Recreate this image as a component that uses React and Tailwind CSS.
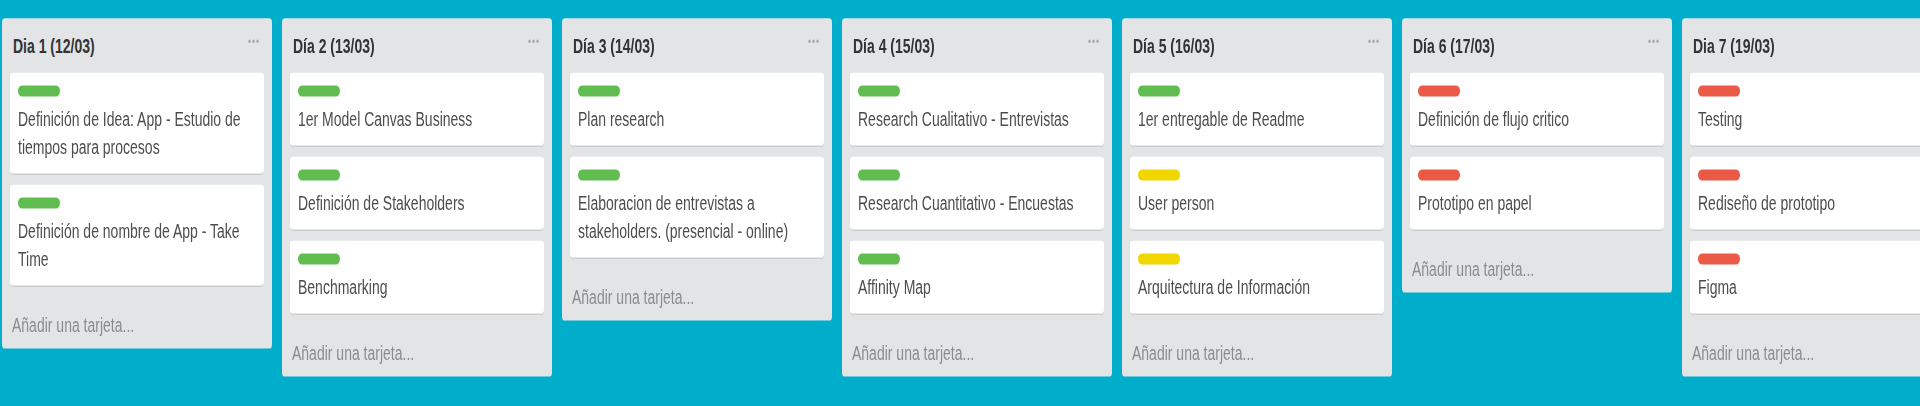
import React from "react";

const GREEN = "bg-[#61bd4f]";
const YELLOW = "bg-[#f2d600]";
const RED = "bg-[#eb5a46]";

const lists = [
  {
    title: "Dia 1 (12/03)",
    cards: [
      { label: GREEN, text: "Definición de Idea: App - Estudio de tiempos para procesos" },
      { label: GREEN, text: "Definición de nombre de App - Take Time" },
    ],
  },
  {
    title: "Día 2 (13/03)",
    cards: [
      { label: GREEN, text: "1er Model Canvas Business" },
      { label: GREEN, text: "Definición de Stakeholders" },
      { label: GREEN, text: "Benchmarking" },
    ],
  },
  {
    title: "Día 3 (14/03)",
    cards: [
      { label: GREEN, text: "Plan research" },
      { label: GREEN, text: "Elaboracion de entrevistas a stakeholders. (presencial - online)" },
    ],
  },
  {
    title: "Día 4 (15/03)",
    cards: [
      { label: GREEN, text: "Research Cualitativo - Entrevistas" },
      { label: GREEN, text: "Research Cuantitativo - Encuestas" },
      { label: GREEN, text: "Affinity Map" },
    ],
  },
  {
    title: "Día 5 (16/03)",
    cards: [
      { label: GREEN, text: "1er entregable de Readme" },
      { label: YELLOW, text: "User person" },
      { label: YELLOW, text: "Arquitectura de Información" },
    ],
  },
  {
    title: "Día 6 (17/03)",
    cards: [
      { label: RED, text: "Definición de flujo critico" },
      { label: RED, text: "Prototipo en papel" },
    ],
  },
  {
    title: "Dia 7 (19/03)",
    cards: [
      { label: RED, text: "Testing" },
      { label: RED, text: "Rediseño de prototipo" },
      { label: RED, text: "Figma" },
    ],
  },
];

function Dots() {
  return (
    <svg width="11" height="3" viewBox="0 0 11 3" className="mt-[4px]">
      <circle cx="1.5" cy="1.5" r="1.2" fill="#a5a5a5" />
      <circle cx="5.5" cy="1.5" r="1.2" fill="#a5a5a5" />
      <circle cx="9.5" cy="1.5" r="1.2" fill="#a5a5a5" />
    </svg>
  );
}

function Card({ label, text }) {
  return (
    <div className="bg-white rounded-[3px] shadow-[0_1px_0_#cccccc] px-[8px] pt-[9px] pb-[9px]">
      <div className={`w-[42px] h-[8px] rounded-[4px] ${label}`} />
      <div className="mt-[6px] text-[14px] leading-[20px] text-[#4d4d4d]">{text}</div>
    </div>
  );
}

function List({ title, cards }) {
  return (
    <div className="w-[270px] shrink-0 bg-[#e2e4e6] rounded-[3px]">
      <div className="flex items-start justify-between pl-[11px] pr-[13px] pt-[11px] pb-[10px]">
        <h2 className="text-[14px] leading-[18px] font-bold text-[#333333]">{title}</h2>
        <Dots />
      </div>
      <div className="flex flex-col gap-[8px] px-[8px]">
        {cards.map((c, i) => (
          <Card key={i} {...c} />
        ))}
      </div>
      <div className="mt-[8px] px-[10px] pt-[10px] pb-[7px] text-[14px] leading-[20px] text-[#8c8c8c]">
        Añadir una tarjeta...
      </div>
    </div>
  );
}

export default function App() {
  return (
    <div className="w-full h-[406px] bg-[#00aecc] overflow-hidden font-['Liberation_Sans',Arial,sans-serif]">
      {/* the screenshot is stretched vertically, so the board is too */}
      <div className="origin-top scale-y-[1.4] h-[290px] flex items-start gap-[10px] pl-[2px] pt-[13px]">
        {lists.map((l, i) => (
          <List key={i} {...l} />
        ))}
      </div>
    </div>
  );
}
